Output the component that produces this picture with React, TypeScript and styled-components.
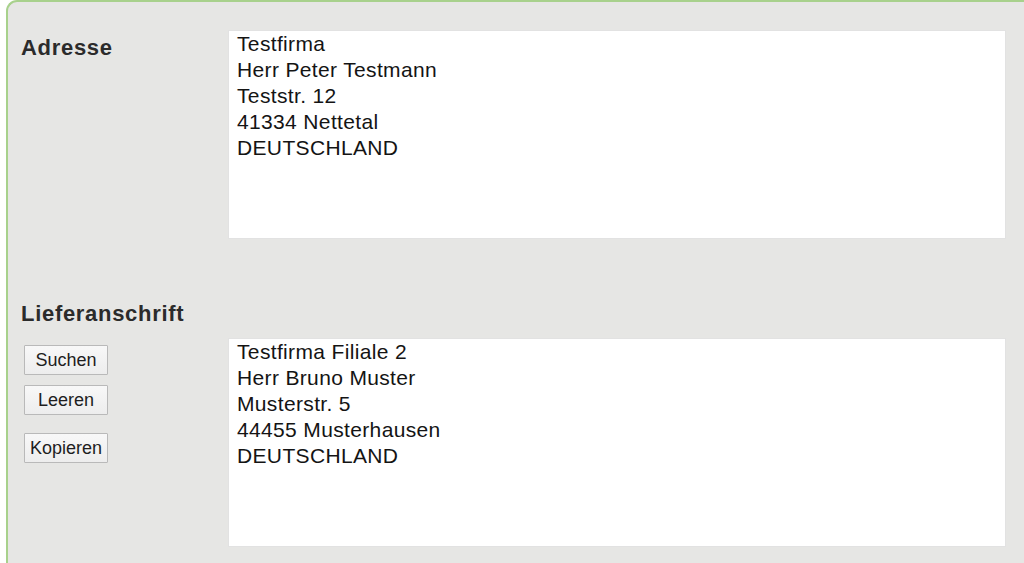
import styled, { createGlobalStyle } from "styled-components";

const GlobalStyle = createGlobalStyle`
  html, body {
    margin: 0;
    padding: 0;
    background: #ffffff;
    overflow: hidden;
  }
  body {
    font-family: "Liberation Sans", Arial, sans-serif;
  }
`;

const Panel = styled.div`
  margin-left: 6px;
  width: 1018px;
  height: 563px;
  box-sizing: border-box;
  padding-top: 28px;
  background: #e6e6e4;
  border: 2px solid #a8d18c;
  border-right: none;
  border-bottom: none;
  border-radius: 11px 0 0 0;
`;

const Row = styled.div<{ $gap?: number }>`
  display: grid;
  grid-template-columns: 220px 778px;
  margin-top: ${(p) => p.$gap ?? 0}px;
`;

const Label = styled.div`
  padding: 5px 0 0 13px;
  font-size: 22px;
  line-height: 26px;
  font-weight: bold;
  letter-spacing: 0.7px;
  color: #2b2b2b;
`;

const Heading = styled(Label)`
  margin-top: 62px;
  padding-top: 0;
`;

const Side = styled.div`
  display: flex;
  flex-direction: column;
  align-items: flex-start;
  padding: 7px 0 0 16px;
`;

const Button = styled.button<{ $top?: number }>`
  width: 84px;
  height: 30px;
  margin-top: ${(p) => p.$top ?? 0}px;
  padding: 0;
  box-sizing: border-box;
  font-family: "Liberation Sans", Arial, sans-serif;
  font-size: 18px;
  color: #1e1e1e;
  background: linear-gradient(#f8f8f8, #ededed);
  border: 1px solid #b9b9b9;
  border-radius: 1px;
`;

const Address = styled.textarea`
  display: block;
  width: 778px;
  height: 209px;
  box-sizing: border-box;
  margin: 0;
  padding: 0 8px;
  border: 1px solid #e2e2e2;
  background: #ffffff;
  resize: none;
  outline: none;
  overflow: hidden;
  font-family: "Liberation Sans", Arial, sans-serif;
  font-size: 21px;
  line-height: 26px;
  letter-spacing: 0.35px;
  color: #141414;
`;

const adresse = "Testfirma\nHerr Peter Testmann\nTeststr. 12\n41334 Nettetal\nDEUTSCHLAND";
const liefer = "Testfirma Filiale 2\nHerr Bruno Muster\nMusterstr. 5\n44455 Musterhausen\nDEUTSCHLAND";

export default function App() {
  return (
    <>
      <GlobalStyle />
      <Panel>
        <Row>
          <Label>Adresse</Label>
          <Address defaultValue={adresse} />
        </Row>
        <Heading>Lieferanschrift</Heading>
        <Row $gap={11}>
          <Side>
            <Button>Suchen</Button>
            <Button $top={10}>Leeren</Button>
            <Button $top={18}>Kopieren</Button>
          </Side>
          <Address defaultValue={liefer} />
        </Row>
      </Panel>
    </>
  );
}
